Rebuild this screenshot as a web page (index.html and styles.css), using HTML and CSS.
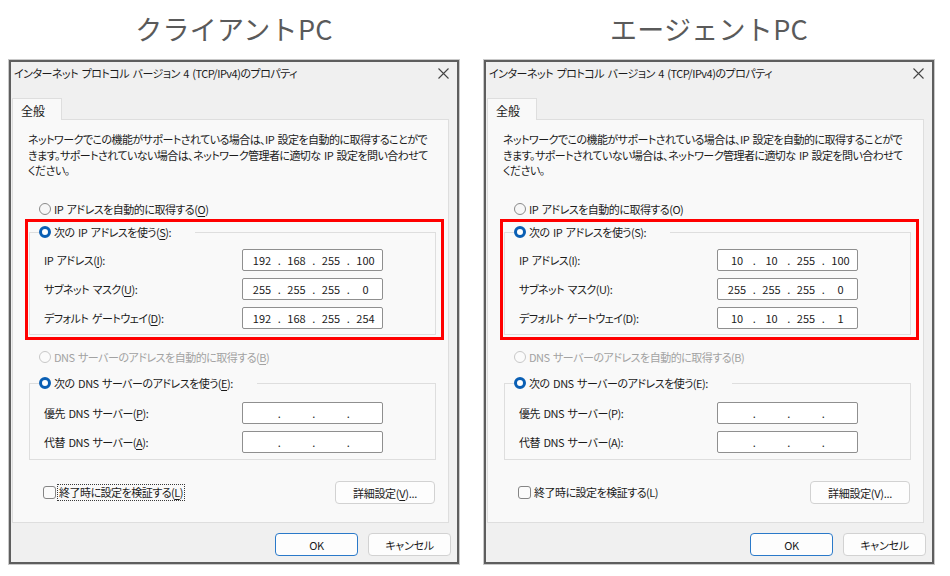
FILE: index.html
```html
<!DOCTYPE html>
<html lang="ja">
<head>
<meta charset="utf-8">
<title>IPv4 設定</title>
<link rel="stylesheet" href="styles.css">
</head>
<body>
<div class="page">
  <section class="col">
    <h1 class="heading">クライアントPC</h1>
    <div class="dialog">
      <div class="titlebar">
        <span class="title">インターネット プロトコル バージョン 4 (TCP/IPv4)のプロパティ</span>
        <svg class="close" width="11" height="11" viewBox="0 0 11 11"><path d="M0.5 0.5 L10.5 10.5 M10.5 0.5 L0.5 10.5" stroke="#444" stroke-width="1.1" fill="none"/></svg>
      </div>
      <div class="tabs"><div class="tab">全般</div></div>
      <div class="panel">
        <p class="desc">ネットワークでこの機能がサポートされている場合は、IP 設定を自動的に取得することがで<br>きます。サポートされていない場合は、ネットワーク管理者に適切な IP 設定を問い合わせて<br>ください。</p>
        <div class="option"><span class="radio"></span><span>IP アドレスを自動的に取得する(<u>O</u>)</span></div>
        <div class="highlight">
          <fieldset class="group">
            <legend class="legend"><span class="radio radio--on"></span><span>次の IP アドレスを使う(<u>S</u>):</span></legend>
            <div class="rows">
              <div class="row"><span class="label">IP アドレス(<u>I</u>):</span><div class="ip"><span class="seg">192</span><span class="dot">.</span><span class="seg">168</span><span class="dot">.</span><span class="seg">255</span><span class="dot">.</span><span class="seg">100</span></div></div>
              <div class="row"><span class="label">サブネット マスク(<u>U</u>):</span><div class="ip"><span class="seg">255</span><span class="dot">.</span><span class="seg">255</span><span class="dot">.</span><span class="seg">255</span><span class="dot">.</span><span class="seg">0</span></div></div>
              <div class="row"><span class="label">デフォルト ゲートウェイ(<u>D</u>):</span><div class="ip"><span class="seg">192</span><span class="dot">.</span><span class="seg">168</span><span class="dot">.</span><span class="seg">255</span><span class="dot">.</span><span class="seg">254</span></div></div>
            </div>
          </fieldset>
        </div>
        <div class="option option--dns option--disabled"><span class="radio radio--disabled"></span><span>DNS サーバーのアドレスを自動的に取得する(<u>B</u>)</span></div>
        <fieldset class="group group--dns">
          <legend class="legend"><span class="radio radio--on"></span><span>次の DNS サーバーのアドレスを使う(<u>E</u>):</span></legend>
          <div class="rows rows--dns">
            <div class="row"><span class="label">優先 DNS サーバー(<u>P</u>):</span><div class="ip"><span class="seg"></span><span class="dot">.</span><span class="seg"></span><span class="dot">.</span><span class="seg"></span><span class="dot">.</span><span class="seg"></span></div></div>
            <div class="row"><span class="label">代替 DNS サーバー(<u>A</u>):</span><div class="ip"><span class="seg"></span><span class="dot">.</span><span class="seg"></span><span class="dot">.</span><span class="seg"></span><span class="dot">.</span><span class="seg"></span></div></div>
          </div>
        </fieldset>
        <div class="bottom">
          <div class="check"><span class="box"></span><span class="check-label check-label--focus">終了時に設定を検証する(<u>L</u>)</span></div>
          <button class="btn btn--adv">詳細設定(<u>V</u>)...</button>
        </div>
      </div>
      <div class="footer">
        <button class="btn btn--default">OK</button>
        <button class="btn">キャンセル</button>
      </div>
    </div>
  </section>

  <section class="col">
    <h1 class="heading">エージェントPC</h1>
    <div class="dialog">
      <div class="titlebar">
        <span class="title">インターネット プロトコル バージョン 4 (TCP/IPv4)のプロパティ</span>
        <svg class="close" width="11" height="11" viewBox="0 0 11 11"><path d="M0.5 0.5 L10.5 10.5 M10.5 0.5 L0.5 10.5" stroke="#444" stroke-width="1.1" fill="none"/></svg>
      </div>
      <div class="tabs"><div class="tab">全般</div></div>
      <div class="panel">
        <p class="desc">ネットワークでこの機能がサポートされている場合は、IP 設定を自動的に取得することがで<br>きます。サポートされていない場合は、ネットワーク管理者に適切な IP 設定を問い合わせて<br>ください。</p>
        <div class="option"><span class="radio"></span><span>IP アドレスを自動的に取得する(O)</span></div>
        <div class="highlight">
          <fieldset class="group">
            <legend class="legend"><span class="radio radio--on"></span><span>次の IP アドレスを使う(S):</span></legend>
            <div class="rows">
              <div class="row"><span class="label">IP アドレス(I):</span><div class="ip"><span class="seg">10</span><span class="dot">.</span><span class="seg">10</span><span class="dot">.</span><span class="seg">255</span><span class="dot">.</span><span class="seg">100</span></div></div>
              <div class="row"><span class="label">サブネット マスク(U):</span><div class="ip"><span class="seg">255</span><span class="dot">.</span><span class="seg">255</span><span class="dot">.</span><span class="seg">255</span><span class="dot">.</span><span class="seg">0</span></div></div>
              <div class="row"><span class="label">デフォルト ゲートウェイ(D):</span><div class="ip"><span class="seg">10</span><span class="dot">.</span><span class="seg">10</span><span class="dot">.</span><span class="seg">255</span><span class="dot">.</span><span class="seg">1</span></div></div>
            </div>
          </fieldset>
        </div>
        <div class="option option--dns option--disabled"><span class="radio radio--disabled"></span><span>DNS サーバーのアドレスを自動的に取得する(B)</span></div>
        <fieldset class="group group--dns">
          <legend class="legend"><span class="radio radio--on"></span><span>次の DNS サーバーのアドレスを使う(E):</span></legend>
          <div class="rows rows--dns">
            <div class="row"><span class="label">優先 DNS サーバー(P):</span><div class="ip"><span class="seg"></span><span class="dot">.</span><span class="seg"></span><span class="dot">.</span><span class="seg"></span><span class="dot">.</span><span class="seg"></span></div></div>
            <div class="row"><span class="label">代替 DNS サーバー(A):</span><div class="ip"><span class="seg"></span><span class="dot">.</span><span class="seg"></span><span class="dot">.</span><span class="seg"></span><span class="dot">.</span><span class="seg"></span></div></div>
          </div>
        </fieldset>
        <div class="bottom">
          <div class="check"><span class="box"></span><span class="check-label">終了時に設定を検証する(L)</span></div>
          <button class="btn btn--adv">詳細設定(V)...</button>
        </div>
      </div>
      <div class="footer">
        <button class="btn btn--default">OK</button>
        <button class="btn">キャンセル</button>
      </div>
    </div>
  </section>
</div>
</body>
</html>
```

FILE: styles.css
```css
* { box-sizing: border-box; }

html, body {
  margin: 0;
  padding: 0;
  background: #ffffff;
}

body {
  width: 950px;
  height: 576px;
  overflow: hidden;
  font-family: "Noto Sans CJK JP", "Noto Sans", sans-serif;
  color: #1b1b1b;
}

.page {
  display: flex;
  gap: 25px;
  padding-left: 9px;
}

.col {
  width: 450px;
  display: flex;
  flex-direction: column;
}

.heading {
  margin: 0;
  height: 60px;
  line-height: 58px;
  text-align: center;
  font-size: 27px;
  font-weight: 400;
  letter-spacing: 0.3px;
  color: #5a5a5a;
}

.dialog {
  height: 504px;
  display: flex;
  flex-direction: column;
  background: #f0f0f0;
  border: 2px solid #5e5e5e;
  box-shadow: 0 0 0 1px #c9c9c9;
  font-size: 11px;
  font-feature-settings: "palt";
  letter-spacing: -0.5px;
  word-spacing: 1.5px;
}

u {
  text-decoration: underline;
  text-decoration-thickness: 1px;
  text-underline-offset: 1.5px;
}

.titlebar {
  height: 22px;
  display: flex;
  align-items: center;
  justify-content: space-between;
  padding: 0 8px 0 3px;
}

.title {
  font-size: 11px;
}

.close {
  display: block;
}

.tabs {
  margin-top: 14px;
  padding-left: 1px;
  display: flex;
  position: relative;
  z-index: 1;
}

.tab {
  width: 50px;
  height: 22px;
  margin-bottom: -1px;
  padding: 3px 0 0 8px;
  background: #f9f9f9;
  border: 1px solid #dedede;
  border-bottom: none;
  font-size: 12px;
  letter-spacing: 0;
}

.panel {
  flex: 1;
  margin: 0 8px 0 1px;
  padding: 12px 12px 0 16px;
  background: #f9f9f9;
  border: 1px solid #dedede;
}

.desc {
  margin: 0 0 0 -1px;
  line-height: 15.5px;
  white-space: nowrap;
  letter-spacing: -0.55px;
}

.option {
  margin-top: 22.5px;
  padding-left: 10px;
  height: 16px;
  display: flex;
  align-items: center;
  gap: 3px;
}

.option--dns {
  margin-top: 9px;
}

.option--disabled {
  color: #a2a2a2;
}

.radio {
  width: 12px;
  height: 12px;
  flex: none;
  display: inline-block;
  border-radius: 50%;
  border: 1px solid #8a8a8a;
  background: #f7f7f7;
}

.radio--on {
  border: 3.5px solid #0a5fb4;
  background: #ffffff;
}

.radio--disabled {
  border-color: #c8c8c8;
  background: #fbfbfb;
}

.highlight {
  margin: 2px -8px 0 -4px;
  padding: 2px 5px 2px 1px;
  border: 3px solid #ff0000;
}

.group {
  margin: 0;
  padding: 0;
  min-width: 0;
  border: 1px solid #dedede;
}

.group--dns {
  margin-top: 10px;
}

.legend {
  margin-left: 9px;
  padding: 0 24px 0 0;
  height: 16px;
  line-height: 16px;
  display: flex;
  align-items: center;
  gap: 3px;
}

.rows {
  padding: 9px 0 5px 14px;
  display: flex;
  flex-direction: column;
  gap: 7px;
}

.rows--dns {
  padding-top: 11px;
  padding-bottom: 6px;
}

.row {
  height: 22px;
  display: flex;
  align-items: center;
}

.label {
  width: 198px;
  flex: none;
}

.ip {
  width: 141px;
  height: 22px;
  display: flex;
  align-items: center;
  padding-left: 6px;
  background: #ffffff;
  border: 1px solid #8f8f8f;
  border-radius: 2px;
  font-size: 11px;
  letter-spacing: 0;
  word-spacing: 0;
}

.seg {
  width: 26px;
  text-align: center;
}

.dot {
  width: 8.5px;
  text-align: center;
}

.bottom {
  margin-top: 21px;
  padding: 0 1px 0 14px;
  display: flex;
  align-items: center;
  justify-content: space-between;
}

.check {
  display: flex;
  align-items: center;
  gap: 2px;
}

.box {
  width: 13px;
  height: 13px;
  border: 1px solid #858585;
  border-radius: 3px;
  background: #fbfbfb;
}

.check-label {
  padding: 0 1px;
  line-height: 15px;
  outline: 1px dotted transparent;
}

.check-label--focus {
  outline: 1px dotted #3a3a3a;
}

.btn {
  height: 23px;
  padding: 0;
  font-family: inherit;
  font-size: 11px;
  font-feature-settings: "palt";
  letter-spacing: -0.3px;
  color: #1b1b1b;
  background: #fdfdfd;
  border: 1px solid #d2d2d2;
  border-radius: 4px;
}

.btn--adv {
  width: 100px;
}

.footer {
  height: 39px;
  padding: 10px 6px 0 0;
  display: flex;
  justify-content: flex-end;
  gap: 10px;
}

.footer .btn {
  width: 83px;
}

.btn--default {
  border-color: #2a79c9;
}
```
